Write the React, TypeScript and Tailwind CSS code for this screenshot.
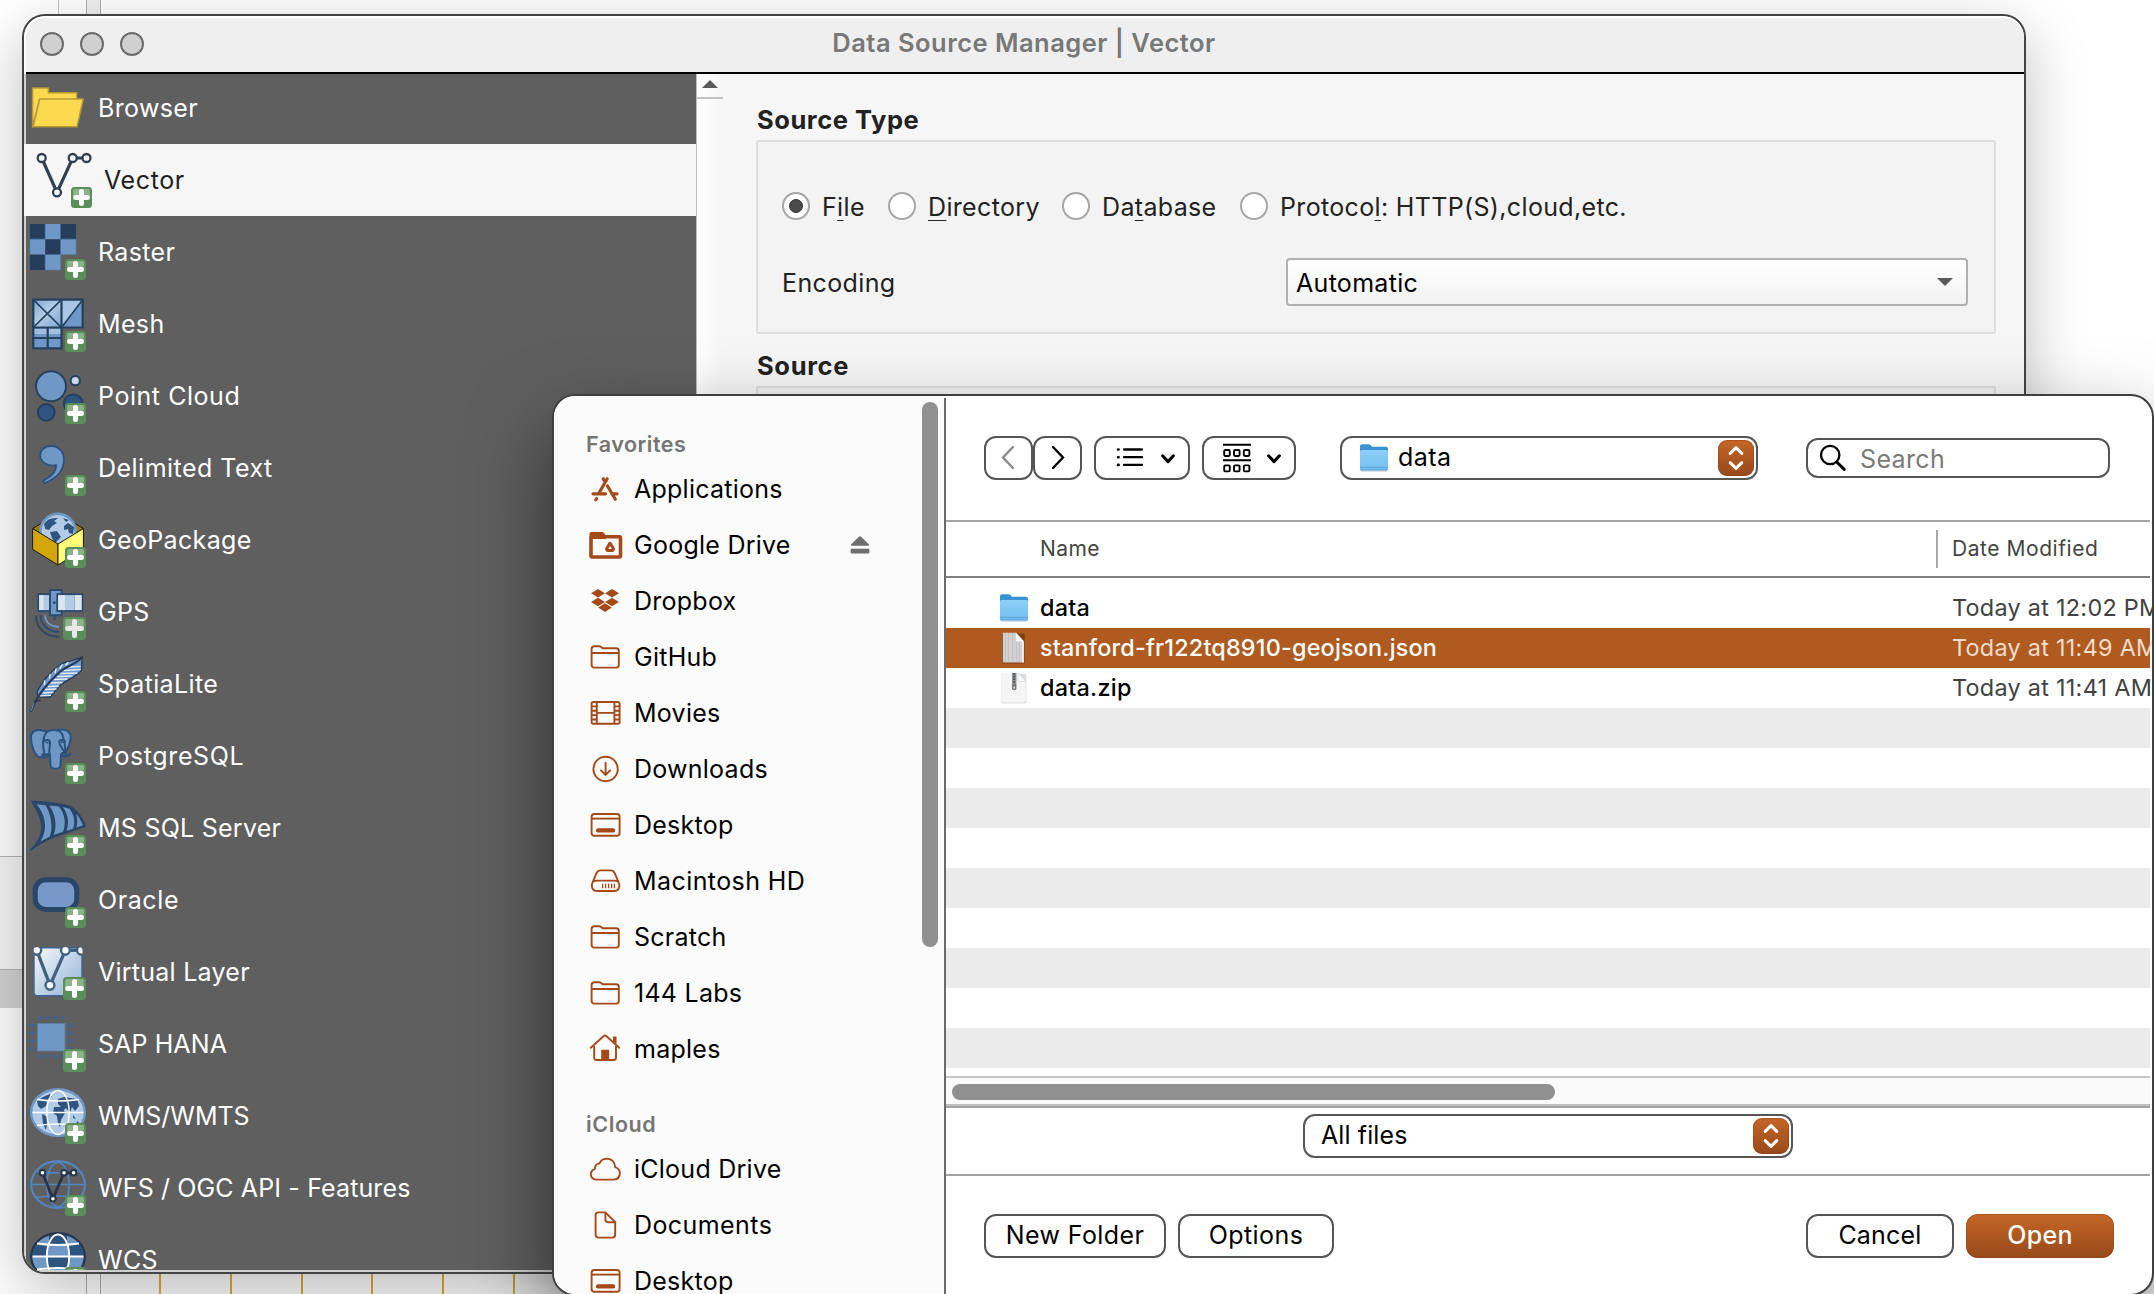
import type { ReactNode } from "react";
import clsx from "clsx";

const NAVY = "#2a4a70";
const DEEP = "#24405f";
const BLUE = "#6f98c6";
const PALE = "#b3cce6";
const RUST = "#a34a18";

/* ---------- Data source icons (56 x 56 canvas) ---------- */

function PlusBadge({ large = false, dim = false }: { large?: boolean; dim?: boolean }) {
  const o = large ? 33 : 35;
  const s = 56 - o;
  const c = o + s / 2;
  const a = s / 2 - 4.6;
  return (
    <g>
      <rect x={o} y={o} width={s} height={s} rx={3.5} fill="#5a8f59" />
      <rect x={o + 2.2} y={o + 2} width={s - 4.4} height={s / 2 - 1.5} rx={1.5} fill="#8db28c" />
      <path
        d={`M${c} ${c - a}V${c + a}M${c - a} ${c}H${c + a}`}
        stroke={dim ? "#e8e8e8" : "#ffffff"}
        strokeWidth={5}
        strokeLinecap="round"
      />
    </g>
  );
}

function VectorGlyph({ nodes, color, r, w, fill }: { nodes: number[][]; color: string; r: number; w: number; fill: string }) {
  return (
    <g stroke={color}>
      <polyline points={nodes.map((n) => n.join(",")).join(" ")} fill="none" strokeWidth={w + 0.9} />
      {nodes.map(([x, y]) => (
        <circle key={`${x}-${y}`} cx={x} cy={y} r={r} fill={fill} strokeWidth={w} />
      ))}
    </g>
  );
}

function Graticule({ color, w }: { color: string; w: number }) {
  return (
    <g stroke={color} strokeWidth={w} fill="none">
      <ellipse cx={28} cy={24.5} rx={11.2} ry={22} />
      <path d="M7 11.5Q28 14.5 49 11.5M2.5 24.5H53.5M7 37.5Q28 34.5 49 37.5" />
    </g>
  );
}

const artwork: Record<string, ReactNode> = {
  Browser: (
    <g fill="#fdd94f" stroke="#b89a35" strokeWidth={1.5} strokeLinejoin="round">
      <path d="M2.6 47V8H18.4V12.8H46.8V20H9.5L2.6 47Z" />
      <path d="M9.6 19H53.2L47 46.8H3.2Z" />
    </g>
  ),
  Vector: (
    <VectorGlyph nodes={[[5.7, 6], [21, 40.3], [36.7, 6], [50.5, 6]]} color="#2f4053" r={4} w={2.3} fill="#f6f6f6" />
  ),
  Raster: (
    <g>
      <path d="M0 0H46V30.5H30.5V46H0Z" fill={BLUE} />
      <path d="M0 0H15.2V15.2H0ZM30.5 0H46V15.2H30.5ZM15.2 15.2H30.5V30.5H15.2ZM0 30.5H15.2V46H0Z" fill="#233d5b" />
      <path d="M30.5 15.2H46V30.5H30.5V46H15.2V30.5M15.2 0V15.2H0V30.5" stroke="#5c80a8" strokeWidth={0.8} fill="none" />
    </g>
  ),
  Mesh: (
    <g>
      <defs>
        <linearGradient id="mesh" x1="0" y1="0" x2="1" y2="1">
          <stop offset="0" stopColor="#7ba3d0" />
          <stop offset="0.45" stopColor="#b3cce6" />
          <stop offset="1" stopColor="#7ba3d0" />
        </linearGradient>
      </defs>
      <rect x={3} y={3.5} width={29} height={28.5} fill="url(#mesh)" />
      <path d="M32 3.5H53L32 32Z" fill="#a9c6e4" />
      <path d="M53 3.5V32H32Z" fill={BLUE} />
      <rect x={3} y={32} width={29} height={21} fill={BLUE} />
      <path d="M4 33H31V38H4Z" fill="#9fc0e2" />
      <path d="M3.3 3.7H52.7V31.5H3.3ZM31.5 3.7V52.3H3.3V31.5M17.7 31.5V52.3M3.3 42H31.5" stroke={DEEP} strokeWidth={2.2} fill="none" />
      <path d="M3.3 3.7L31.5 31.5M31.5 3.7L3.3 31.5M52.7 3.7L31.5 31.5" stroke={DEEP} strokeWidth={1.7} />
    </g>
  ),
  "Point Cloud": (
    <g stroke="#27405e" strokeWidth={2}>
      <circle cx={43.3} cy={36} r={9.5} fill="#2f5480" />
      <circle cx={21} cy={18.3} r={15} fill={BLUE} />
      <circle cx={45.3} cy={12.7} r={4.6} fill="#c9d9ea" />
      <circle cx={16.3} cy={44.3} r={8.4} fill="#2f5480" />
    </g>
  ),
  "Delimited Text": (
    <path
      d="M21 6C28.5 6 34 11.5 34 19.5C34 30 26.5 38.5 14.5 43.3L13 40.8C21.5 36.5 26.5 30.5 26 25.2C18 27 10.2 22 10.2 15.5C10.2 10 14.8 6 21 6Z"
      fill={BLUE}
      stroke="#2c517c"
      strokeWidth={1.8}
    />
  ),
  GeoPackage: (
    <g strokeLinejoin="round">
      <path d="M2.6 16.5L12 11H44L53.4 16.5L28 32Z" fill="#a37c07" stroke="#1a1a00" />
      <circle cx={28} cy={19.5} r={17.6} fill={PALE} stroke={BLUE} strokeWidth={2.6} />
      <path d="M14 12Q18 5 28 6L24 9L27 11L22 14L19 18L15 17ZM20 20L27 19L31 25L25 31L22 26ZM34 14L38 11L44 15L43 22L39 21L38 17L34 18ZM33 6L39 8L36 10Z" fill="#2f5480" />
      <path d="M2.6 16.5L28 32V53L2.6 37.3Z" fill="#d3a70b" stroke="#1a1a00" />
      <path d="M53.4 16.5L28 32V53L53.4 37.3Z" fill="#fdfd77" stroke="#1a1a00" />
    </g>
  ),
  GPS: (
    <g>
      <rect x={8.2} y={10.2} width={14} height={16.8} fill={PALE} stroke={NAVY} strokeWidth={1.8} />
      <path d="M9.2 11.2H13.5V26H9.2Z" fill="#dde5ee" />
      <path d="M20 6H31.6V31.3H20Z" fill={BLUE} stroke={NAVY} strokeWidth={1.9} />
      <path d="M24.5 31V36" stroke={NAVY} strokeWidth={2} />
      <rect x={27.2} y={10.2} width={25.3} height={16.8} fill={PALE} stroke={NAVY} strokeWidth={1.8} />
      <path d="M28.2 11.2H35V26H28.2ZM45 11.2H51.5V26H45Z" fill="#dde5ee" />
      <path d="M44.5 11.2V26" stroke="#8fb0d4" />
      <circle cx={24.3} cy={18.7} r={1.4} fill={NAVY} />
      <path d="M5.8 31.5C6 44 15 52.7 29 52.7" stroke="#33475f" strokeWidth={2} fill="none" />
      <path d="M10.5 31.5C11 41 18 47.7 29 47.7" stroke={NAVY} strokeWidth={2} fill="none" />
      <path d="M15 31.5C15.5 38 20 42.7 29 42.7" stroke={BLUE} strokeWidth={2} fill="none" />
    </g>
  ),
  SpatiaLite: (
    <g strokeLinecap="round" strokeLinejoin="round">
      <path d="M52 1.2L51.6 14.5C42 24 32 25 27 33L20 41H8.5L7 36C12 25 24 12 33 7Q42 5 52 1.2Z" fill={BLUE} stroke="#263b57" strokeWidth={1.3} />
      <path d="M50 10.5L38 11M50 13.5L34 14.5M47 17L31 17.5M42 20L27.5 20.5M37 23L24 23.5M32 26.5L21 27M28.5 30L18.5 30.5M26 33L15.5 33.5M23 36.3L13 37M20.5 39.3L10.5 39.8M32 9L30 12.5M26 13L25 17M20 18.5L19.5 22M14.5 25L14.5 28.5M38 6.5L36 9" stroke="#e4eef8" strokeWidth={1.3} />
      <path d="M52 1.2C46 9 36 9.5 28 17.5C17 28 9 38 4.5 47L1.2 55" stroke="#263b57" strokeWidth={2.2} fill="none" />
      <path d="M3.6 47.5L1.5 54.5" stroke={BLUE} strokeWidth={0.9} />
      <path d="M4.5 46L10 44" stroke="#263b57" strokeWidth={1.8} />
    </g>
  ),
  PostgreSQL: (
    <g fill={BLUE} stroke="#2c517c" strokeWidth={2} strokeLinejoin="round" strokeLinecap="round">
      <path d="M14 3C7 .6 1 2.5 1 9.5C1 17 4 26 8.6 29C11 30 12.5 28 14.5 26.5L22 24V4Z" />
      <path d="M28 2C35 .2 41 3.5 40.7 9.5C40.5 16 36.5 22.5 35.5 25.5L29 24Z" />
      <path d="M12.5 26.5L14.5 29.5L19.5 27M31 27.5Q36 29.5 40.5 26" fill="none" strokeWidth={2.4} />
      <path d="M16 5C19 1 28 .8 31.5 5C33.5 8.5 36 20 35 25C33 24.5 31.5 25 31 27L30.5 37C30 42 21 42 20.5 37L19.8 26.5L14.5 26C12.5 19 12.5 10 16 5Z" />
      <path d="M13 14C16 11 20 11.5 20 15C20.3 19 18 23 19.8 27M35 13.5C32.5 11 29 11.5 29.3 14.5C29.8 18.5 32.5 20.5 34.6 24" fill="none" />
      <path d="M16.5 14.5L18 14.8M31.5 14.2L33 14" strokeWidth={1.6} />
    </g>
  ),
  "MS SQL Server": (
    <g strokeLinejoin="round">
      <path d="M1.7 1.2C17 2.5 33 3 42 7.5C48.5 12.5 53 19 55.3 26.3C36 33 17 37 1 50C8 42.5 12.3 34.5 12 26.5C11.5 17.5 6.5 9 1.7 1.2Z" fill="#294568" stroke="#294568" strokeWidth={1.4} />
      <path d="M6.5 4.2L15.5 5.2C21 14 23.5 27 19.8 36.5L10.5 41.5C18.5 28 15 14 6.5 4.2Z" fill={BLUE} />
      <path d="M19.2 5.4L29 6.5C35 14 36.2 24 33 31.8L23.7 35C27.5 25 25 13 19.2 5.4Z" fill={BLUE} />
      <path d="M32.8 7L39.5 8.7C44.5 15 45.5 23 43 28.7L36.5 30.8C39.5 23 38 14 32.8 7Z" fill={BLUE} />
      <path d="M46 13.5C49 17 51.5 21.5 52.8 25.2L46.3 27.6C47.8 23 47.5 18 46 13.5Z" fill={BLUE} />
    </g>
  ),
  Oracle: <rect x={5.2} y={7.8} width={41.6} height={29.6} rx={10.5} fill="#7798c8" stroke="#294568" strokeWidth={5} />,
  "Virtual Layer": (
    <g>
      <defs>
        <linearGradient id="virt" x1="0" y1="0" x2="1" y2="1">
          <stop offset="0.1" stopColor="#eef2f7" />
          <stop offset="1" stopColor="#8dafd5" />
        </linearGradient>
        <clipPath id="virtclip">
          <rect x={3.3} y={3} width={49.2} height={49.5} rx={3.5} />
        </clipPath>
      </defs>
      <rect x={4} y={3.8} width={48} height={48} rx={3} fill="url(#virt)" stroke="#3f6390" strokeWidth={1.4} />
      <g clipPath="url(#virtclip)">
        <VectorGlyph nodes={[[6.8, 6.3], [20, 41.3], [35.4, 6.3], [51.4, 6.3]]} color="#42607f" r={4.4} w={2.4} fill="#f4f6f9" />
      </g>
    </g>
  ),
  "SAP HANA": (
    <g>
      <rect x={7.4} y={7.4} width={27.6} height={27.6} fill={BLUE} stroke="#587fab" strokeWidth={0.8} />
      <path d="M8 2H35M8 40.3H35" stroke="#46628a" strokeWidth={4} strokeDasharray="4 3.6" />
      <path d="M2 7.4V35.5M40 7.4V35.5" stroke="#46628a" strokeWidth={4} strokeDasharray="4 3.8" />
    </g>
  ),
  "WMS/WMTS": (
    <g>
      <ellipse cx={28} cy={24.5} rx={26.8} ry={23.3} fill={PALE} stroke={BLUE} strokeWidth={2.4} />
      <path d="M7 13L13 9L20 6L22 8L17 13L16 18L11 21L8 18ZM12 26L18 29L17 36L16 42L13 36ZM28 11L34 9L47 11L49 18L45 23L42 19L40 25L36 20L34 22L28 16ZM24 19L33 19L35 25L31 32L30 39L28 36L27 28L23 25ZM43 27L46 31L43 30ZM47 33L50 36L46 38Z" fill="#2f5480" />
      <Graticule color="#ffffff" w={1.4} />
    </g>
  ),
  "WFS / OGC API - Features": (
    <g>
      <ellipse cx={28} cy={24.5} rx={26.8} ry={23.3} fill="none" stroke="#5385c2" strokeWidth={2.2} />
      <Graticule color="#5385c2" w={1.7} />
      <VectorGlyph nodes={[[12.5, 12.7], [22.9, 38.7], [34, 12.7], [43.6, 12.7]]} color="#273749" r={2.8} w={2} fill="#ffffff" />
    </g>
  ),
  WCS: (
    <g>
      <defs>
        <clipPath id="wcs">
          <ellipse cx={28} cy={24.5} rx={26} ry={23} />
        </clipPath>
      </defs>
      <g clipPath="url(#wcs)">
        <rect width={56} height={50} fill={BLUE} />
        <path d="M0 12H17V24.5H0ZM39 12H56V24.5H39ZM19 0H37V12.5H19ZM17 24.5H39V37H17Z" fill="#2f5480" />
      </g>
      <ellipse cx={28} cy={24.5} rx={26.8} ry={23.3} fill="none" stroke="#24374e" strokeWidth={2.2} />
      <Graticule color="#ffffff" w={1.9} />
    </g>
  ),
};

const sources = [
  "Browser", "Vector", "Raster", "Mesh", "Point Cloud", "Delimited Text", "GeoPackage", "GPS", "SpatiaLite",
  "PostgreSQL", "MS SQL Server", "Oracle", "Virtual Layer", "SAP HANA", "WMS/WMTS", "WFS / OGC API - Features", "WCS",
];
const largeBadge = new Set(["GPS", "Virtual Layer", "SAP HANA"]);

const sourceTracking: Record<string, string> = {
  "Point Cloud": "tracking-[0.55px]",
  "Delimited Text": "tracking-[0.48px]",
  PostgreSQL: "tracking-[0.6px]",
  "MS SQL Server": "tracking-[0.25px]",
  Oracle: "tracking-[0.6px]",
  Vector: "tracking-[0.6px]",
  "SAP HANA": "tracking-[0.1px]",
  "WMS/WMTS": "tracking-[0px]",
  "WFS / OGC API - Features": "tracking-[0.13px]",
  "Virtual Layer": "tracking-[0.25px]",
};

function SourceRow({ name }: { name: string }) {
  const selected = name === "Vector";
  return (
    <li
      className={clsx(
        "flex h-[72px] shrink-0 items-center",
        selected ? "-ml-[2px] bg-[#f6f6f6] pl-3 text-[#1f1f1f]" : "pl-1 text-white",
      )}
    >
      <svg width={56} height={56} viewBox="0 0 56 56" className="shrink-0 overflow-visible">
        {artwork[name]}
        {name !== "Browser" && <PlusBadge large={largeBadge.has(name)} dim={name === "GPS"} />}
      </svg>
      <span className={clsx("ml-3 whitespace-nowrap", sourceTracking[name] ?? "tracking-[0.35px]")}>{name}</span>
    </li>
  );
}

/* ---------- Data source manager window ---------- */

function Radio({ checked, children, className }: { checked?: boolean; children: ReactNode; className?: string }) {
  return (
    <label className={clsx("flex items-center gap-[12px] whitespace-nowrap tracking-[0.34px]", className)}>
      <span className="flex size-7 items-center justify-center rounded-full border-2 border-[#a6a6a6] bg-white">
        {checked && <span className="size-[14px] rounded-full border border-[#2e2e2e] bg-[#4b4b4b]" />}
      </span>
      <span className="pt-[2px]">{children}</span>
    </label>
  );
}

function Key({ children }: { children: string }) {
  return <span className="underline decoration-1 underline-offset-[4px]">{children}</span>;
}

function ManagerWindow() {
  return (
    <div className="absolute top-[14px] left-[22px] flex h-[1260px] w-[2004px] flex-col overflow-hidden rounded-[23px] border-2 border-[#444] bg-[#f6f6f6] shadow-[0_18px_60px_rgba(0,0,0,0.26)]">
      <header className="flex h-[56px] shrink-0 items-center rounded-t-[21px] border-t-2 border-l-2 border-white bg-[#efefef] pl-[14px]">
        <div className="-mt-[2px] flex w-[200px] gap-4">
          {[0, 1, 2].map((i) => (
            <span key={i} className="size-6 rounded-full border-2 border-[#6b6b6b] bg-[#d0d0d0]" />
          ))}
        </div>
        <h1 className="-ml-[200px] grow pr-[16px] pb-[4px] text-center text-[25.5px] font-semibold tracking-[0.48px] text-[#787878]">
          Data Source Manager | Vector
        </h1>
      </header>
      <div className="ml-[2px] h-[2px] shrink-0 bg-black" />
      <div className="flex min-h-0 grow border-b-2 border-l-2 border-[#cfcfcf]">
        <ul className="-mt-[2px] flex w-[670px] shrink-0 flex-col bg-[#5f5f5f] [clip-path:inset(2px_0_0_-2px)]">
          {sources.map((s) => (
            <SourceRow key={s} name={s} />
          ))}
        </ul>
        <div className="w-[27px] shrink-0 border-l border-[#bdbdbd] bg-linear-to-r from-white to-[#f6f6f6]">
          <div className="flex h-[25px] justify-center border-b-2 border-[#c3c3c3] pt-[6px]">
            <svg width={16} height={8} viewBox="0 0 16 8">
              <path d="M0 8L8 0L16 8Z" fill="#5a5a5a" />
            </svg>
          </div>
        </div>
        <main className="flex grow flex-col pt-[30px] pr-[28px] pl-[33px] text-[#222]">
          <h2 className="pl-[1px] text-[25.5px] leading-[32px] font-bold tracking-[0.55px]">Source Type</h2>
          <section className="mt-[4px] h-[194px] rounded-[3px] border-2 border-[#dedede] bg-[#f3f3f3] pr-[26px] pl-[24px]">
            <div className="flex h-[128px] items-center">
              <Radio checked className="w-[106px]">F<Key>i</Key>le</Radio>
              <Radio className="w-[174px]"><Key>D</Key>irectory</Radio>
              <Radio className="w-[178px]">Da<Key>t</Key>abase</Radio>
              <Radio>Protoco<Key>l</Key>: HTTP(S),cloud,etc.</Radio>
            </div>
            <div className="-mt-[12px] flex items-center justify-between">
              <span className="pt-[2px] tracking-[0.38px]">Encoding</span>
              <div className="flex h-12 w-[682px] items-center justify-between rounded-[4px] border-2 border-[#b0b0b0] bg-linear-to-b from-white to-[#f2f2f2] pr-[13px] pl-[8px] text-black">
                <span className="pt-[1px] tracking-[0.3px]">Automatic</span>
                <svg width={16} height={8} viewBox="0 0 16 8">
                  <path d="M0 0L8 8L16 0Z" fill="#5a5a5a" />
                </svg>
              </div>
            </div>
          </section>
          <h2 className="mt-[16px] pl-[1px] text-[25.5px] leading-[32px] font-bold tracking-[0.65px]">Source</h2>
          <section className="mt-[4px] grow rounded-t-[3px] border-2 border-b-0 border-[#dedede] bg-[#f3f3f3]" />
        </main>
      </div>
    </div>
  );
}

/* ---------- File dialog icons (40 x 40 canvas) ---------- */

const folderOutline = (
  <path d="M6.6 27.8V12Q6.6 9.2 9.4 9.2H14Q15.4 9.2 16.5 10.2L17.8 11.3H31.2Q33.8 11.3 33.8 13.9V28Q33.8 30.6 31.2 30.6H9.4Q6.6 30.6 6.6 27.8ZM6.6 16H33.8" />
);
const desktopOutline = (
  <>
    <rect x={6.6} y={9} width={28} height={21.8} rx={2.8} />
    <path d="M6.6 13.6H34.6" />
    <rect x={11.6} y={23.8} width={18} height={3.2} rx={0.8} fill={RUST} strokeWidth={1} />
  </>
);

const placeIcons: Record<string, ReactNode> = {
  Applications: (
    <g strokeWidth={3.2} strokeLinecap="round">
      <path d="M22.2 9.8L14 24M18.2 9.8L20 12.6M8 24.8H20.5M28 24.8H32M22.5 17L30.3 30.2M11.6 29.6L10.8 30.8" />
    </g>
  ),
  "Google Drive": (
    <>
      <rect x={6} y={11.8} width={29.5} height={20.2} rx={1.2} strokeWidth={3.6} />
      <path d="M4.5 14V8.5Q4.5 7 6 7H18L21 10.5V14Z" fill={RUST} stroke="none" />
      <path d="M24.8 18.2L21.5 24L22.6 25.6H27.4L28.5 24L25.2 18.2Z" strokeWidth={3} strokeLinejoin="round" />
    </>
  ),
  Dropbox: (
    <path
      d="M13 8L20 12.2L13 16.4L6 12.2ZM27 8L34 12.2L27 16.4L20 12.2ZM13 16.8L20 21L13 25.2L6 21ZM27 16.8L34 21L27 25.2L20 21ZM13.2 26.4L20 22.3L26.8 26.4L20 31Z"
      fill={RUST}
      stroke="none"
    />
  ),
  GitHub: folderOutline,
  Movies: (
    <>
      <rect x={6.6} y={9} width={28} height={21.8} rx={1.8} />
      <path d="M11.8 9V30.8M29.4 9V30.8M11.8 19.9H29.4" />
      <path d="M6.6 13.4H11.8M6.6 17.8H11.8M6.6 22.1H11.8M6.6 26.5H11.8M29.4 13.4H34.6M29.4 17.8H34.6M29.4 22.1H34.6M29.4 26.5H34.6" />
    </>
  ),
  Downloads: (
    <>
      <circle cx={20.6} cy={20} r={12.2} />
      <path d="M20.6 13.8V25.6M16 21.4L20.6 26L25.2 21.4" strokeLinecap="round" />
    </>
  ),
  Desktop: desktopOutline,
  "Macintosh HD": (
    <>
      <path d="M6.8 24.6Q6.8 22.8 7.6 21.4L11.6 12Q12.8 9.4 15.6 9.4H25.6Q28.4 9.4 29.6 12L33.6 21.4Q34.4 22.8 34.4 24.6Q34.4 30 29.2 30H12Q6.8 30 6.8 24.6ZM8.4 20.3Q9.8 19.6 12 19.6H29.2Q31.4 19.6 32.8 20.3" />
      <path d="M17.6 22.8V27.2M20.6 22.8V27.2M23.6 22.8V27.2M26.6 22.8V27.2M29.4 22.8V27.2" strokeWidth={1.3} />
    </>
  ),
  Scratch: folderOutline,
  "144 Labs": folderOutline,
  maples: (
    <>
      <path d="M5.8 18.8L19 6.8Q20 6 21 6.8L34.2 18.8" strokeLinecap="round" />
      <path d="M9.2 17V28.4Q9.2 31 11.8 31H28.4Q31 31 31 28.4V17" />
      <path d="M16.2 31V20.8H24.2V31Z" fill={RUST} stroke="none" />
      <path d="M29 13V8.4H30.6V14.6" />
    </>
  ),
  "iCloud Drive": (
    <path d="M12.4 30.6Q6 30.6 5.8 25.2Q6 21 10 19.8Q9.8 15 14.4 14.4Q16.6 9.6 22 9.6Q29.6 10.2 30.2 18.2Q34.9 19.8 34.9 24.4Q34.5 30.2 29 30.6Z" strokeLinejoin="round" />
  ),
  Documents: (
    <path d="M13.4 7.4H20.4L30.2 17.2V29.6Q30.2 32.6 27.2 32.6H13.4Q10.6 32.6 10.6 29.6V10.2Q10.6 7.4 13.4 7.4ZM20.4 7.4V14.6Q20.4 17.2 23 17.2H30.2" />
  ),
};

function Place({ name, eject }: { name: string; eject?: boolean }) {
  return (
    <li className="flex h-14 shrink-0 items-center pl-[31px]">
      <svg width={40} height={40} viewBox="0 0 40 40" fill="none" stroke={RUST} strokeWidth={1.9}>
        {placeIcons[name]}
      </svg>
      <span className={clsx("ml-[9px] w-[216px] whitespace-nowrap", name === "Documents" || name === "Macintosh HD" ? "tracking-[0.42px]" : "tracking-[0.25px]")}>
        {name}
      </span>
      {eject && (
        <svg width={20} height={20} viewBox="0 0 20 20" fill="#6e6e6e">
          <path d="M9.2 1.6Q10 .8 10.8 1.6L19 9.6Q19.6 10.8 18.4 10.8H1.6Q.4 10.8 1 9.6Z" />
          <rect x={0.6} y={13.8} width={18.8} height={4.8} rx={1} />
        </svg>
      )}
    </li>
  );
}

function BlueFolder() {
  return (
    <svg width={30} height={30} viewBox="0 0 30 30" className="shrink-0">
      <defs>
        <linearGradient id="bf" x1="0" y1="0" x2="0" y2="1">
          <stop offset="0" stopColor="#8dd0f7" />
          <stop offset="1" stopColor="#72bdf0" />
        </linearGradient>
      </defs>
      <rect x={1} y={8} width={28} height={21} rx={2} fill="#000" opacity={0.12} />
      <path d="M1 3.2Q1 1.2 3 1.2H9.4Q10.6 1.2 11.4 2L13 3.8H27Q29 3.8 29 5.8V12H1Z" fill="#3c93d4" />
      <path d="M1 8.5Q1 7 2.5 7H27.5Q29 7 29 8.5V25.6Q29 27.6 27 27.6H3Q1 27.6 1 25.6Z" fill="url(#bf)" />
      <path d="M1 24.4H29M1.4 26.8H28.6" stroke="#5ba6dc" strokeWidth={1} />
    </svg>
  );
}

function PlainDoc() {
  return (
    <svg width={30} height={34} viewBox="0 0 30 34" className="shrink-0">
      <rect x={3} y={2.6} width={22.6} height={30} rx={1} fill="#5c2c0c" opacity={0.6} />
      <path d="M3.8 1.8H17L25 10.4V31.4H3.8Z" fill="#d2d2d2" />
      <path d="M6.4 2V31.4M9.4 2V31.4M13.4 2V31.4M20.4 10V31.4M17.4 10V31.4" stroke="#bcbcbc" strokeWidth={0.8} />
      <path d="M17 1.8L25 10.4H17Z" fill="#fafafa" />
      <path d="M23.8 10.4V31.4" stroke="#efefef" strokeWidth={1.6} />
    </svg>
  );
}

function ZipDoc() {
  return (
    <svg width={30} height={34} viewBox="0 0 30 34" className="shrink-0">
      <rect x={2.4} y={3} width={25} height={29.6} rx={2} fill="#000" opacity={0.14} />
      <path d="M2.4 3.6Q2.4 2 4 2H19L26.8 10.4V29.6Q26.8 31.4 25 31.4H4Q2.4 31.4 2.4 29.6Z" fill="#f5f5f5" />
      <path d="M19 2L26.8 10.4H20.4Q19 10.4 19 9Z" fill="#fff" stroke="#d4d4d4" strokeWidth={0.8} />
      <rect x={13} y={2} width={4.4} height={13} fill="#8c8c8c" />
      <path d="M15.2 2V15" stroke="#3d4a52" strokeWidth={1.8} strokeDasharray="1.4 1.4" />
      <rect x={13} y={13} width={4.4} height={6} rx={1.6} fill="#777" />
      <rect x={14.4} y={15.4} width={1.6} height={2.2} fill="#ddd" />
    </svg>
  );
}

function Stepper() {
  return (
    <span className="flex size-9 items-center justify-center rounded-[9px] bg-linear-to-b from-[#c66627] to-[#97491a] shadow-[inset_0_0_0_1px_rgba(130,55,15,0.35)]">
      <svg width={16} height={26} viewBox="0 0 16 26" fill="none" stroke="#fff" strokeWidth={3} strokeLinecap="round" strokeLinejoin="round">
        <path d="M2.2 8.4L8 2.6L13.8 8.4M2.2 17.6L8 23.4L13.8 17.6" />
      </svg>
    </span>
  );
}

function SmallChevron() {
  return (
    <svg width={16} height={12} viewBox="0 0 16 12" fill="none" stroke="#000" strokeWidth={3.1} strokeLinecap="round" strokeLinejoin="round">
      <path d="M2.6 3.8L8 9.6L13.4 3.8" />
    </svg>
  );
}

const frame = "flex shrink-0 items-center rounded-[12px] border-2 border-[#555] bg-white";

function Button({ children, className }: { children: ReactNode; className?: string }) {
  return <button className={clsx(frame, "h-11 justify-center pb-[3px]", className)}>{children}</button>;
}

/* ---------- File dialog ---------- */

function Places() {
  return (
    <aside className="flex w-[390px] shrink-0 overflow-hidden bg-[#fbfbfb]">
      <div className="grow pt-9">
        <h3 className="pl-[32px] text-[21.5px] leading-6 font-semibold tracking-[0.5px] text-[#757575]">Favorites</h3>
        <ul className="mt-[5px]">
          {["Applications", "Google Drive", "Dropbox", "GitHub", "Movies", "Downloads", "Desktop", "Macintosh HD", "Scratch", "144 Labs", "maples"].map((n) => (
            <Place key={n} name={n} eject={n === "Google Drive"} />
          ))}
        </ul>
        <h3 className="mt-[35px] pl-[32px] text-[21.5px] leading-6 font-semibold tracking-[0.6px] text-[#757575]">iCloud</h3>
        <ul className="mt-[5px]">
          {["iCloud Drive", "Documents", "Desktop"].map((n) => (
            <Place key={n} name={n} />
          ))}
        </ul>
      </div>
      <div className="mt-[6px] mr-[6px] h-[545px] w-4 shrink-0 rounded-full bg-[#909090]" />
    </aside>
  );
}

const files = [
  { name: "data", date: "Today at 12:02 PM", icon: <BlueFolder /> },
  { name: "stanford-fr122tq8910-geojson.json", date: "Today at 11:49 AM", icon: <PlainDoc />, selected: true },
  { name: "data.zip", date: "Today at 11:41 AM", icon: <ZipDoc /> },
];

function FileDialog() {
  return (
    <div className="absolute top-[394px] left-[552px] flex h-[902px] w-[1602px] overflow-hidden rounded-[23px] border-2 border-[#3f3f3f] bg-white shadow-[0_36px_80px_rgba(0,0,0,0.5)]">
      <Places />
      <div className="mt-[2px] w-[2px] shrink-0 bg-[#6b6b6b]" />
      <div className="flex w-[1206px] shrink-0 flex-col">
        <div className="flex h-[124px] shrink-0 items-center pl-[38px]">
          <div className={clsx(frame, "h-11 w-[49px] justify-center")}>
            <svg width={16} height={26} viewBox="0 0 16 26" fill="none" stroke="#8a8a8a" strokeWidth={2.4} strokeLinecap="round">
              <path d="M12 2L2 12.5L12 23" />
            </svg>
          </div>
          <div className={clsx(frame, "h-11 w-[49px] justify-center")}>
            <svg width={16} height={26} viewBox="0 0 16 26" fill="none" stroke="#000" strokeWidth={2.4} strokeLinecap="round">
              <path d="M3 2L13 12.5L3 23" />
            </svg>
          </div>
          <div className={clsx(frame, "ml-3 h-11 w-24 justify-between pr-3 pl-[20px]")}>
            <svg width={28} height={22} viewBox="0 0 28 22" stroke="#000" strokeWidth={2.3} strokeLinecap="round">
              <path d="M8 2.5H26M8 10.2H26M8 17.9H26" />
              <path d="M2 2.5H2.6M2 10.2H2.6M2 17.9H2.6" strokeWidth={2.6} />
            </svg>
            <SmallChevron />
          </div>
          <div className={clsx(frame, "ml-3 h-11 w-[94px] justify-between pr-3 pl-[19px]")}>
            <svg width={28} height={30} viewBox="0 0 28 30" stroke="#000" strokeWidth={1.9} fill="none">
              <path d="M0 1.8H28M0 17.2H28" />
              {[1.2, 11, 20.8].map((x) => (
                <g key={x}>
                  <rect x={x} y={7} width={5.6} height={6} rx={1.2} />
                  <rect x={x} y={22.4} width={5.6} height={6} rx={1.2} />
                </g>
              ))}
            </svg>
            <SmallChevron />
          </div>
          <div className={clsx(frame, "ml-[44px] h-11 w-[418px] pr-[2px] pl-[17px]")}>
            <BlueFolder />
            <span className="ml-[9px] grow pb-[2px] tracking-[0.45px]">data</span>
            <Stepper />
          </div>
          <div className={clsx(frame, "ml-12 h-10 w-[304px] pl-[11px]")}>
            <svg width={28} height={28} viewBox="0 0 28 28" fill="none" stroke="#000" strokeWidth={2.3} strokeLinecap="round">
              <circle cx={11.2} cy={11} r={9.2} />
              <path d="M17.8 18L25.2 25.4" strokeWidth={3} />
            </svg>
            <span className="ml-[13px] pt-[2px] tracking-[0.36px] text-[#7a7a7a]">Search</span>
          </div>
        </div>
        <div className="mr-[2px] flex h-[58px] shrink-0 items-center border-y-2 border-t-[#a6a6a6] border-b-[#808080] text-[21px] text-[#444]">
          <span className="w-[990px] pl-[94px] tracking-[0.45px]">Name</span>
          <span className="h-[38px] w-[2px] bg-[#a8a8a8]" />
          <span className="pl-[14px] tracking-[0.55px]">Date Modified</span>
        </div>
        <div className="h-[10px] shrink-0" />
        {files.map((f) => (
          <div key={f.name} className={clsx("mr-[2px] flex h-10 shrink-0 items-center pl-[53px] text-[23.4px]", f.selected && "bg-[#af5b20]")}>
            {f.icon}
            <span className={clsx("ml-[11px] w-[912px] shrink-0 pb-px", f.selected ? "font-medium tracking-[0.19px] text-white" : "font-[450] tracking-[0.25px] text-black")}>{f.name}</span>
            <span className={clsx("pb-px tracking-[0.28px] whitespace-nowrap", f.selected ? "text-[#f3dccb]" : "text-[#424242]")}>{f.date}</span>
          </div>
        ))}
        {Array.from({ length: 9 }, (_, i) => (
          <div key={i} className={clsx("mr-[2px] h-10 shrink-0", i % 2 === 0 && "bg-[#ebebeb]")} />
        ))}
        <div className="h-2 shrink-0" />
        <div className="mr-[2px] flex h-[30px] shrink-0 border-y-2 border-t-[#c5c5c5] border-b-[#c0c0c0] bg-[#fafafa] pt-[6px] pl-[6px]">
          <div className="h-4 w-[603px] rounded-full bg-[#909090]" />
        </div>
        <div className="mr-[2px] h-[70px] shrink-0 border-y-2 border-[#a3a3a3] pt-[6px] pl-[357px]">
          <div className={clsx(frame, "h-11 w-[490px] justify-between pr-[2px] pl-4")}>
            <span className="pb-[2px] tracking-[0.1px]">All files</span>
            <Stepper />
          </div>
        </div>
        <div className="mt-[38px] flex pr-[38px] pl-[38px]">
          <Button className="w-[182px] tracking-[0.4px]">New Folder</Button>
          <Button className="ml-3 w-[156px] tracking-[0.43px]">Options</Button>
          <Button className="ml-auto w-[148px] tracking-[0.21px]">Cancel</Button>
          <button className="ml-3 flex h-11 w-[148px] items-center justify-center rounded-[12px] bg-linear-to-b from-[#c66627] to-[#97491a] pb-[3px] font-medium tracking-[0.3px] text-white shadow-[inset_0_0_0_1px_rgba(130,55,15,0.35)]">
            Open
          </button>
        </div>
      </div>
    </div>
  );
}

/* ---------- Desktop behind the windows ---------- */

function Backdrop() {
  return (
    <div className="flex h-full flex-col">
      <div className="flex h-[856px] pl-[58px]">
        <div className="w-[28px] border-l border-[#c4c4c4]" />
        <div className="w-[15px] border-x border-[#b0b0b0] bg-[#f0f0f0]" />
      </div>
      <div className="h-[114px] border-y border-[#b5b5b5] bg-[#f6f6f6]" />
      <div className="h-[38px] w-[300px] bg-[#d4d4d4]" />
      <div className="flex grow pl-[86px]">
        <div className="w-[15px] border-x border-[#b0b0b0]" />
        <div className="flex grow bg-[#fcfcfc] pl-[58px]">
          {Array.from({ length: 8 }, (_, i) => (
            <div key={i} className="w-[70.8px] border-l-2 border-[#d9ab33]" />
          ))}
        </div>
      </div>
    </div>
  );
}

export default function App() {
  return (
    <div className="relative h-[1294px] w-[2154px] overflow-hidden bg-white font-['Inter',sans-serif] text-[25px] leading-[32px] text-black">
      <Backdrop />
      <ManagerWindow />
      <FileDialog />
    </div>
  );
}
